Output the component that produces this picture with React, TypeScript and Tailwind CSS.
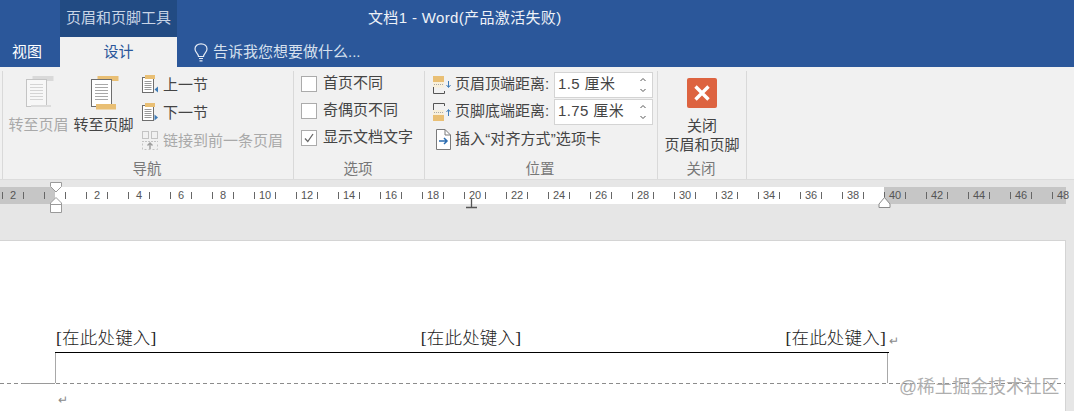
import type { ReactNode } from "react";

const CJK = "font-['Liberation_Sans','Noto_Sans_CJK_SC',sans-serif]";

function BigDoc({ disabled }: { disabled?: boolean }) {
  const band = disabled ? "#d9d9d9" : "#e9bf74";
  const edge = disabled ? "#c4c4c4" : "#6e6e6e";
  const line = disabled ? "#d4d4d4" : "#a8a8a8";
  return (
    <svg width="32" height="34" viewBox="-3 0 32 34" aria-hidden>
      <rect x="6.5" y="0" width="21" height="5" fill={band} />
      <rect x="0.5" y="3.5" width="20" height="27" fill={disabled ? "#f7f7f7" : "#fff"} stroke={edge} />
      {disabled ? (
        <rect x="5" y="29" width="20" height="2" fill="#dcdcdc" />
      ) : (
        <rect x="5" y="28" width="20" height="5.5" fill={band} />
      )}
      {[8, 11, 14, 17, 20, 23].map((y) => (
        <line key={y} x1="4" x2="17" y1={y + 0.5} y2={y + 0.5} stroke={line} />
      ))}
    </svg>
  );
}

function SmallDoc({ dir }: { dir: "prev" | "next" }) {
  return (
    <svg width="17" height="20" viewBox="0 0 17 20" aria-hidden>
      <rect x="0.5" y="2.5" width="11" height="15" fill="#fff" stroke="#6e6e6e" />
      <rect x="3" y="0" width="10" height="4" fill="#e9bf74" />
      {[6, 8, 10, 12, 14].map((y) => (
        <line key={y} x1="2.5" x2="9.5" y1={y + 0.5} y2={y + 0.5} stroke="#9a9a9a" />
      ))}
      {dir === "prev" ? (
        <path d="M12.5 14.5 L16 11.5 V17.5 Z" fill="#3e7cb8" />
      ) : (
        <path d="M12.5 11.5 L16 14.5 L12.5 17.5 Z" fill="#3e7cb8" />
      )}
    </svg>
  );
}

function LinkIcon() {
  return (
    <svg width="17" height="20" viewBox="0 0 17 20" aria-hidden>
      <rect x="0.5" y="0.5" width="6" height="7" fill="none" stroke="#c4c4c4" />
      <rect x="9.5" y="0.5" width="6" height="7" fill="none" stroke="#c4c4c4" />
      <path d="M0.5 12.5v6h15v-6" fill="none" stroke="#c4c4c4" strokeDasharray="2 2" />
      <line x1="0" x2="16" y1="10.5" y2="10.5" stroke="#c4c4c4" strokeDasharray="2 1" />
      <path d="M8 18v-6M5.5 14.5 8 12l2.5 2.5" fill="none" stroke="#9c9c9c" strokeWidth="1.4" />
    </svg>
  );
}

function MarginIcon({ top }: { top?: boolean }) {
  return (
    <svg width="19" height="18" viewBox="0 0 19 18" aria-hidden>
      {top ? (
        <>
          <rect x="0" y="0" width="11" height="6" fill="#e9bf74" />
          <rect x="0" y="6" width="11" height="5.5" fill="#f8f0dc" />
          <line x1="1" x2="11" y1="8.5" y2="8.5" stroke="#a8a8a8" strokeDasharray="1 1" />
          <path d="M0.5 11v6.5h11V15" fill="none" stroke="#555" />
          <path d="M15.5 5v6M13.5 9l2 2.5 2-2.5" fill="none" stroke="#3e7cb8" />
        </>
      ) : (
        <>
          <path d="M0.5 7V0.5h11V3" fill="none" stroke="#555" />
          <rect x="0" y="7" width="11" height="5" fill="#f8f0dc" />
          <line x1="1" x2="11" y1="9.5" y2="9.5" stroke="#a8a8a8" strokeDasharray="1 1" />
          <rect x="0" y="12" width="11" height="6" fill="#e9bf74" />
          <path d="M15.5 13V7M13.5 9l2-2.5 2 2.5" fill="none" stroke="#3e7cb8" />
        </>
      )}
    </svg>
  );
}

function InsertTabIcon() {
  return (
    <svg width="17" height="22" viewBox="0 0 17 22" aria-hidden>
      <path d="M1.5 0.5H10L15.5 6V20.5H1.5Z" fill="#fff" stroke="#7a7a7a" />
      <path d="M10 0.5V6H15.5" fill="none" stroke="#7a7a7a" />
      <path d="M4 12h8M9 9l3 3-3 3" fill="none" stroke="#2b6cb0" strokeWidth="1.5" />
    </svg>
  );
}

function Group({ width, label, children }: { width: string; label: string; children: ReactNode }) {
  return (
    <section className={`${width} flex shrink-0 flex-col border-r border-[#d9d9d9]`}>
      <div className="h-[91px]">{children}</div>
      <div className="pr-[2px] text-center text-[14.5px] leading-[20px] text-[#777]">{label}</div>
    </section>
  );
}

function BigButton({ label, disabled }: { label: string; disabled?: boolean }) {
  return (
    <div className={`flex w-[65px] flex-col items-center pt-[9px] ${disabled ? "text-[#a9a9a9]" : "text-[#444]"}`}>
      <div className="flex h-[34px] w-[32px] justify-center">
        <BigDoc disabled={disabled} />
      </div>
      <span className="mt-[4px] whitespace-nowrap text-[15px] leading-[22px]">{label}</span>
    </div>
  );
}

function SmallRow({ icon, label, disabled }: { icon: ReactNode; label: string; disabled?: boolean }) {
  return (
    <div className={`flex h-[28px] items-center gap-[4px] ${disabled ? "text-[#a9a9a9]" : "text-[#444]"}`}>
      {icon}
      <span className="whitespace-nowrap text-[15px]">{label}</span>
    </div>
  );
}

function CheckRow({ label, checked }: { label: string; checked?: boolean }) {
  return (
    <div className="flex h-[27px] items-center gap-[6px]">
      <span className="flex h-[16px] w-[16px] items-center justify-center border border-[#ababab] bg-white">
        {checked && (
          <svg width="12" height="12" viewBox="0 0 12 12" aria-hidden>
            <path d="M2 6.5 4.8 9.5 10 2" fill="none" stroke="#666" strokeWidth="1.3" />
          </svg>
        )}
      </span>
      <span className="whitespace-nowrap text-[15px] text-[#444]">{label}</span>
    </div>
  );
}

function SpinRow({ icon, label, value }: { icon: ReactNode; label: string; value: string }) {
  return (
    <div className="flex h-[27px] items-center">
      <div className="flex w-[19px] justify-start">{icon}</div>
      <span className="ml-[3px] w-[99px] whitespace-nowrap text-[15px] text-[#444]">{label}</span>
      <div className="flex h-[26px] w-[99px] items-center justify-between border border-[#d4d4d4] bg-white pl-[3px] pr-[5px]">
        <span className="whitespace-nowrap text-[15px] tracking-[0.4px] text-[#444]">{value}</span>
        <svg width="8" height="18" viewBox="0 0 8 18" aria-hidden>
          <path d="M1.5 5 4 2.5 6.5 5M1.5 13 4 15.5 6.5 13" fill="none" stroke="#555" />
        </svg>
      </div>
    </div>
  );
}

const rulerTicks = Array.from({ length: 51 }, (_, i) => 2 + i * 21);
const rulerNumbers = [
  { n: 2, x: 13 },
  ...Array.from({ length: 24 }, (_, i) => ({ n: (i + 1) * 2, x: 55 + (i + 1) * 42 })),
];

function Ruler() {
  return (
    <div className="relative mt-[7px] flex h-[17px] w-[1066px] bg-white">
      <div className="w-[55px] bg-[#c6c6c6]" />
      <div className="w-[829px]" />
      <div className="flex-1 bg-[#c6c6c6]" />
      {rulerTicks
        .filter((x) => x < 1066)
        .map((x) => (
          <span key={x} className="absolute top-[5px] h-[7px] w-px bg-[#666]" style={{ left: x }} />
        ))}
      {rulerNumbers.map(({ n, x }) => (
        <span
          key={x}
          className="absolute top-0 -translate-x-1/2 font-['Liberation_Sans',sans-serif] text-[11px] leading-[17px] tracking-[-0.2px] text-[#555]"
          style={{ left: x }}
        >
          {n}
        </span>
      ))}
      {/* left indent markers */}
      <svg className="absolute left-[50px] top-[-5px]" width="12" height="32" viewBox="0 0 12 32" aria-hidden>
        <path d="M0.5 0.5H11.5V4.5L6 10L0.5 4.5Z" fill="#fff" stroke="#9a9a9a" />
        <path d="M6 15.5L11.5 21V30.5H0.5V21Z" fill="#fff" stroke="#9a9a9a" />
        <line x1="0.5" x2="11.5" y1="22.5" y2="22.5" stroke="#9a9a9a" />
      </svg>
      {/* tab stop */}
      <svg className="absolute left-[465px] top-[12px]" width="13" height="10" viewBox="0 0 13 10" aria-hidden>
        <path d="M6.5 0V8M1 8.5H12" fill="none" stroke="#555" strokeWidth="1.3" />
      </svg>
      {/* right indent */}
      <svg className="absolute left-[878px] top-[10px]" width="13" height="11" viewBox="0 0 13 11" aria-hidden>
        <path d="M6.5 0.5L12 7V10.5H1V7Z" fill="#fff" stroke="#8a8a8a" />
      </svg>
    </div>
  );
}

function HeaderSlot({ mark }: { mark?: boolean }) {
  return (
    <span className="relative whitespace-nowrap">
      [在此处键入]
      {mark && <span className="absolute left-full top-[3px] ml-[3px] text-[12px] text-[#8a8a8a]">↵</span>}
    </span>
  );
}

export default function App() {
  return (
    <div className={`h-[411px] w-[1074px] overflow-hidden bg-[#e6e6e6] ${CJK}`}>
      {/* title bar */}
      <div className="flex h-[37px] bg-[#2b579a]">
        <div className="w-[60px]" />
        <div className="flex w-[117px] items-center justify-center bg-[#224b83] text-[15px] text-[#c9d5e6]">
          页眉和页脚工具
        </div>
        <div className="flex items-center pl-[191px] text-[15px] tracking-[0.35px] text-[#eef2f8]">
          文档1 - Word(产品激活失败)
        </div>
      </div>

      {/* tabs */}
      <div className="flex h-[30px] items-center bg-[#2b579a]">
        <div className="w-[60px] pr-[6px] text-center text-[15px] text-white">视图</div>
        <div className="flex h-full w-[117px] items-center justify-center bg-[#f1f1f1] text-[15px] text-[#2b579a]">
          设计
        </div>
        <div className="ml-[17px] flex items-center gap-[5px] text-[15px] text-[#d6e0ee]">
          <svg width="14" height="19" viewBox="0 0 14 19" aria-hidden>
            <path
              d="M4.5 13.5C4.5 10.5 1 9.5 1 6C1 3 3.5 0.8 7 0.8C10.5 0.8 13 3 13 6C13 9.5 9.5 10.5 9.5 13.5Z"
              fill="none"
              stroke="#e6ecf5"
              strokeWidth="1.2"
            />
            <path d="M5 15.5H9M5.5 17.8H8.5" stroke="#e6ecf5" strokeWidth="1.2" />
          </svg>
          <span>告诉我您想要做什么...</span>
        </div>
      </div>

      {/* ribbon */}
      <div className="flex h-[113px] border-b border-[#dcdcdc] bg-[#f1f1f1] pt-[4px]">
        <div className="ml-[2px] w-px bg-[#d9d9d9]" />
        <Group width="w-[291px]" label="导航">
          <div className="-mt-[4px] flex pl-[3px]">
            <BigButton label="转至页眉" disabled />
            <BigButton label="转至页脚" />
            <div className="ml-[6px] pt-[4px]">
              <SmallRow icon={<SmallDoc dir="prev" />} label="上一节" />
              <SmallRow icon={<SmallDoc dir="next" />} label="下一节" />
              <SmallRow icon={<LinkIcon />} label="链接到前一条页眉" disabled />
            </div>
          </div>
        </Group>
        <Group width="w-[131px]" label="选项">
          <div className="-mt-[1px] pl-[7px]">
            <CheckRow label="首页不同" />
            <CheckRow label="奇偶页不同" />
            <CheckRow label="显示文档文字" checked />
          </div>
        </Group>
        <Group width="w-[233px]" label="位置">
          <div className="pl-[8px]">
            <SpinRow icon={<MarginIcon top />} label="页眉顶端距离:" value="1.5 厘米" />
            <SpinRow icon={<MarginIcon />} label="页脚底端距离:" value="1.75 厘米" />
            <div className="mt-[1px] flex h-[27px] items-center gap-[3px] pl-[2px] text-[15px] text-[#444]">
              <InsertTabIcon />
              <span className="whitespace-nowrap tracking-[0.1px]">插入“对齐方式”选项卡</span>
            </div>
          </div>
        </Group>
        <Group width="w-[89px]" label="关闭">
          <div className="flex flex-col items-center pt-[7px] text-center text-[15px] leading-[19px] text-[#444]">
            <div className="flex h-[30px] w-[30px] items-center justify-center rounded-[2px] bg-[#dd6340]">
              <svg width="18" height="18" viewBox="0 0 18 18" aria-hidden>
                <path d="M2.5 2.5 15.5 15.5M15.5 2.5 2.5 15.5" stroke="#fff" strokeWidth="3.4" />
              </svg>
            </div>
            <div className="mt-[8px]">关闭</div>
            <div className="whitespace-nowrap">页眉和页脚</div>
          </div>
        </Group>
      </div>

      <Ruler />

      {/* page */}
      <div className="relative mt-[36px] h-[171px] w-[1066px] border-r border-t border-[#d4d4d4] bg-white">
        <div className="ml-[55px] w-[834px] pt-[84px]">
          <div className="flex justify-between border-b-[1.5px] border-black pb-[1px] pl-px pr-[3px] font-['Liberation_Serif','Noto_Sans_CJK_SC',serif] text-[17.5px] font-light leading-[26px] tracking-[0.2px] text-[#222]">
            <HeaderSlot />
            <HeaderSlot />
            <HeaderSlot mark />
          </div>
          <div className="mr-px h-[30px] border-x border-[#a8a8a8]" />
        </div>
        <div className="relative h-px bg-[repeating-linear-gradient(90deg,#8c8c8c_0_4px,transparent_4px_7px)]">
          <div className="ml-[22px] h-px w-[33px] bg-[#9a9a9a]" />
        </div>
        <div className="ml-[58px] mt-[9px] text-[12px] leading-[14px] text-[#8a8a8a]">↵</div>
        <div className="absolute left-[899px] top-[134px] whitespace-nowrap text-[17.8px] leading-[24px] text-[#aeaeae]">
          @稀土掘金技术社区
        </div>
      </div>
    </div>
  );
}
